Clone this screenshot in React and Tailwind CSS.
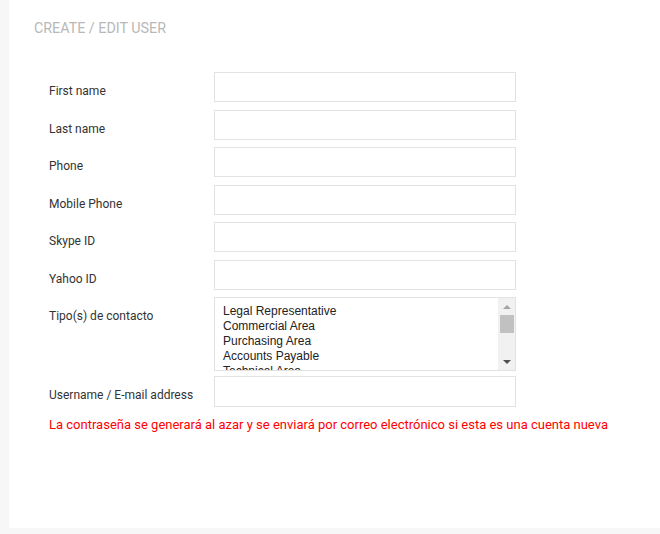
import { useState } from "react";

const fields = [
  { label: "First name", key: "first" },
  { label: "Last name", key: "last" },
  { label: "Phone", key: "phone" },
  { label: "Mobile Phone", key: "mobile" },
  { label: "Skype ID", key: "skype" },
  { label: "Yahoo ID", key: "yahoo" },
];

const contactTypes = [
  "Legal Representative",
  "Commercial Area",
  "Purchasing Area",
  "Accounts Payable",
  "Technical Area",
];

function Row({ label, children }) {
  return (
    <div className="flex items-start">
      <label className="w-[165px] shrink-0 pt-[12px] text-[12px] leading-[14px] text-[#333]">
        {label}
      </label>
      {children}
    </div>
  );
}

function ContactSelect() {
  return (
    <div className="flex h-[74px] w-[302px] border border-[#e2e2e2] bg-white">
      <div className="flex-1 overflow-hidden pl-[8px] pt-[6px] font-['Liberation_Sans',Arial,sans-serif] text-[12px] leading-[15px] text-[#222]">
        {contactTypes.map((t) => (
          <div key={t}>{t}</div>
        ))}
      </div>
      <div className="flex w-[17px] flex-col items-center bg-[#f1f1f1]">
        <div className="flex h-[17px] w-full items-center justify-center">
          <div className="h-0 w-0 border-x-[4px] border-b-[4px] border-x-transparent border-b-[#a3a3a3]" />
        </div>
        <div className="h-[18px] w-[14px] bg-[#c1c1c1]" />
        <div className="flex-1" />
        <div className="flex h-[17px] w-full items-center justify-center">
          <div className="h-0 w-0 border-x-[4px] border-t-[4px] border-x-transparent border-t-[#505050]" />
        </div>
      </div>
    </div>
  );
}

export default function App() {
  const [form, setForm] = useState({});

  return (
    <div className="h-[534px] overflow-hidden bg-[#f7f7f7] pl-[9px] font-['Roboto',sans-serif]">
      <div className="h-[528px] bg-white pl-[25px] pt-[20px]">
        <h1 className="text-[14.3px] leading-[17px] uppercase text-[#b8b8b8]">
          Create / Edit User
        </h1>

        <div className="mt-[35px] flex flex-col gap-[7.5px] pl-[15px]">
          {fields.map(({ label, key }) => (
            <Row key={key} label={label}>
              <input
                type="text"
                value={form[key] || ""}
                onChange={(e) => setForm({ ...form, [key]: e.target.value })}
                className="h-[30px] w-[302px] border border-[#e2e2e2] bg-white px-2 text-[12px] outline-none"
              />
            </Row>
          ))}
          <Row label="Tipo(s) de contacto">
            <ContactSelect />
          </Row>
          <div className="-mt-[2.5px]">
            <Row label="Username / E-mail address">
              <input
                type="text"
                value={form.username || ""}
                onChange={(e) => setForm({ ...form, username: e.target.value })}
                className="h-[31px] w-[302px] border border-[#e2e2e2] bg-white px-2 text-[12px] outline-none"
              />
            </Row>
          </div>
          <p className="mt-[2px] text-[13px] leading-[16px] text-[#ff0000]">
            La contraseña se generará al azar y se enviará por correo
            electrónico si esta es una cuenta nueva
          </p>
        </div>
      </div>
    </div>
  );
}
